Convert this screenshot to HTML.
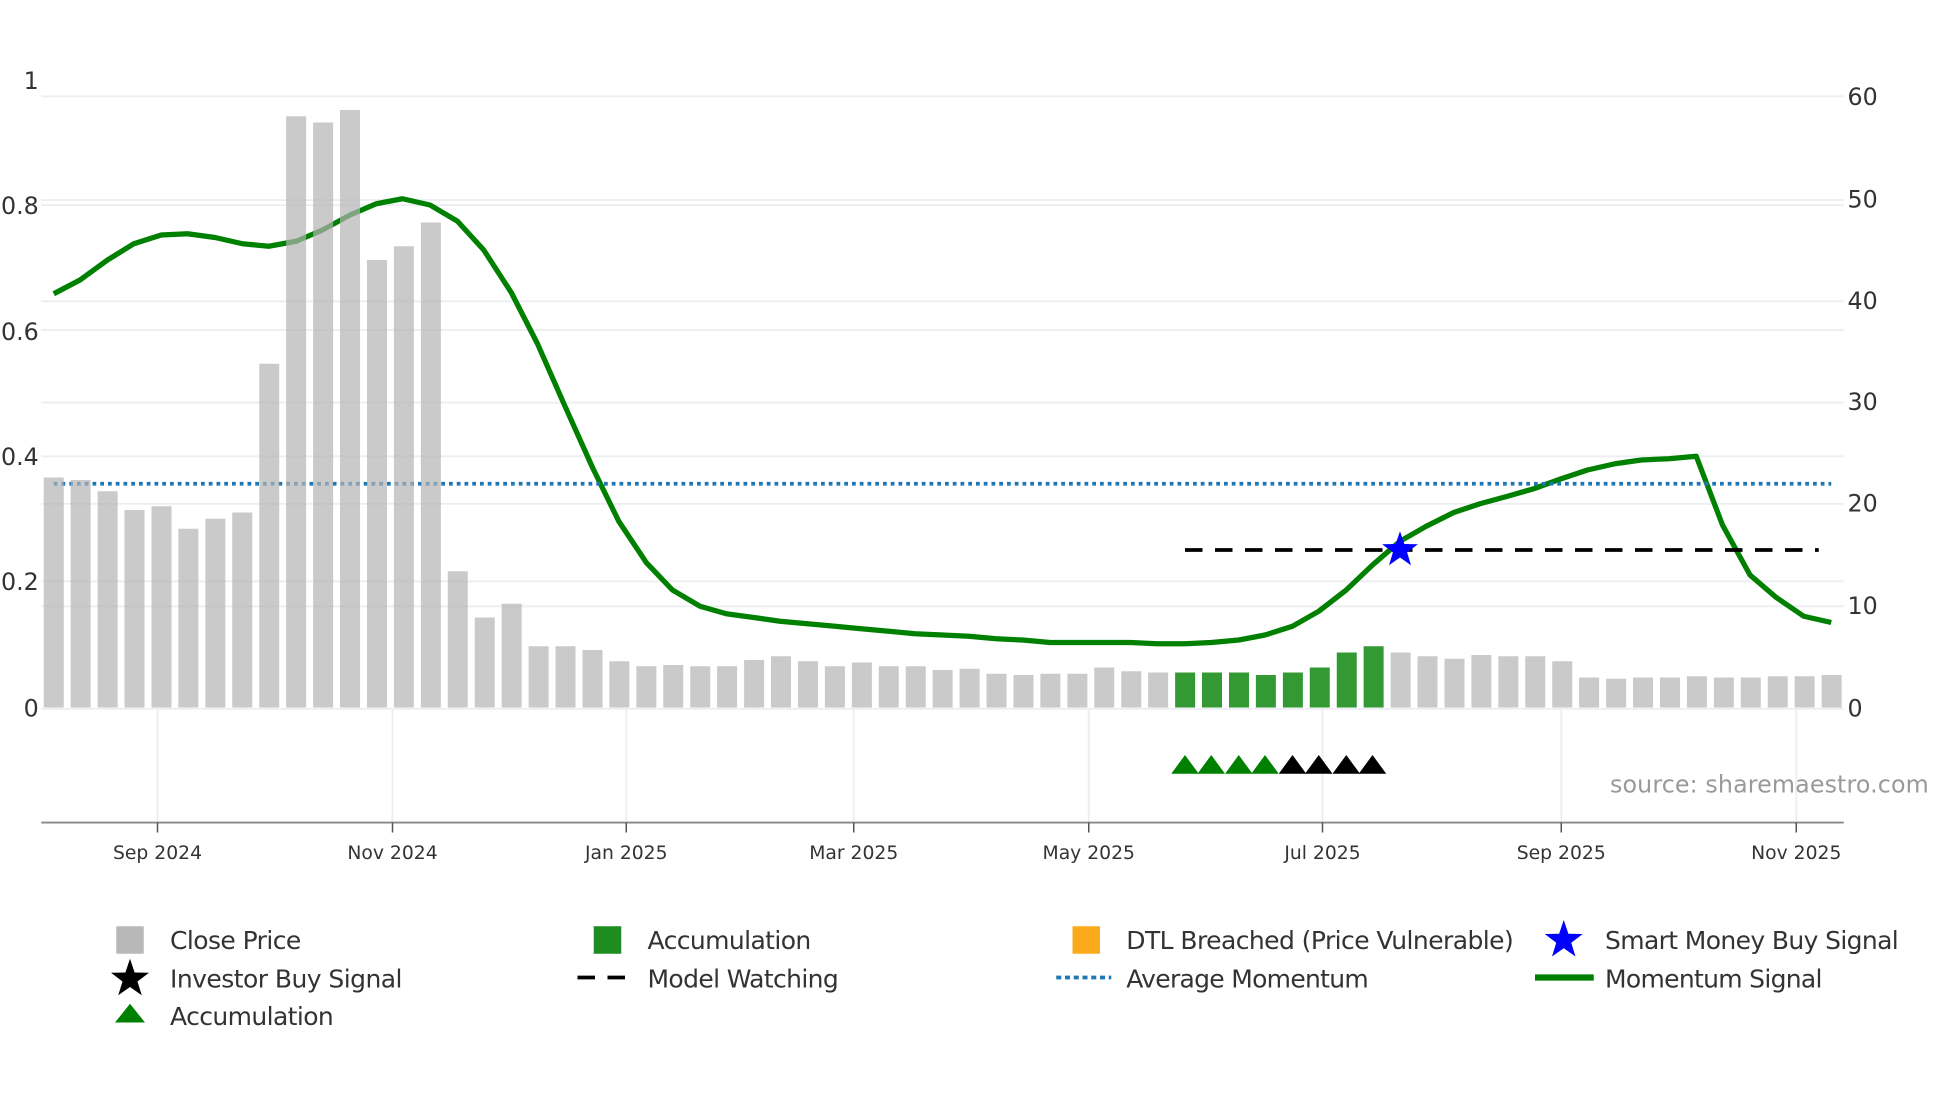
<!DOCTYPE html>
<html><head><meta charset="utf-8"><style>
html,body{margin:0;padding:0;background:#fff;}
svg{display:block;}
text{font-family:"DejaVu Sans","Liberation Sans",sans-serif;fill:#333;}
</style></head><body>
<svg width="1960" height="1102" viewBox="0 0 1568 881.6" xmlns="http://www.w3.org/2000/svg">
<g stroke="#eceef2" stroke-width="1.5">
<line x1="33" y1="77" x2="1475" y2="77"/><line x1="33" y1="160" x2="1475" y2="160"/><line x1="33" y1="241" x2="1475" y2="241"/><line x1="33" y1="322" x2="1475" y2="322"/><line x1="33" y1="403" x2="1475" y2="403"/><line x1="33" y1="485" x2="1475" y2="485"/>
<line x1="33" y1="164" x2="1475" y2="164"/><line x1="33" y1="264" x2="1475" y2="264"/><line x1="33" y1="365" x2="1475" y2="365"/><line x1="33" y1="465" x2="1475" y2="465"/><line x1="33" y1="567" x2="1475" y2="567"/>
<line x1="126" y1="568" x2="126" y2="658"/><line x1="314" y1="568" x2="314" y2="658"/><line x1="501" y1="568" x2="501" y2="658"/><line x1="683" y1="568" x2="683" y2="658"/><line x1="871" y1="568" x2="871" y2="658"/><line x1="1058" y1="568" x2="1058" y2="658"/><line x1="1249" y1="568" x2="1249" y2="658"/><line x1="1437" y1="568" x2="1437" y2="658"/>
</g>
<polyline fill="none" stroke="#008000" stroke-width="4.2" stroke-linejoin="round" points="43,235 64,224 86,208 107,195 129,188 150,187 172,190 194,195 215,197 237,193 258,184 280,172 301,163 322,159 344,164 366,177 387,200 409,234 430,275 452,325 474,374 495,417 517,450 538,472 560,485 581,491 603,494 624,497 646,499 668,501 689,503 711,505 732,507 754,508 775,509 797,511 818,512 840,514 861,514 883,514 904,514 926,515 948,515 969,514 991,512 1012,508 1034,501 1055,489 1077,472 1098,452 1120,433 1141,421 1163,410 1184,403 1206,397 1227,391 1249,383 1270,376 1292,371 1313,368 1335,367 1357,365 1378,420 1400,460 1421,478 1443,493 1465,498"/>
<line x1="43" y1="387" x2="1465" y2="387" stroke="#1f77b4" stroke-width="3" stroke-dasharray="3,3.2"/>
<g fill="#b3b3b3" fill-opacity="0.7">
<rect x="35" y="382" width="16" height="184"/><rect x="56.5" y="384" width="16" height="182"/><rect x="78.1" y="393" width="16" height="173"/><rect x="99.6" y="408" width="16" height="158"/><rect x="121.2" y="405" width="16" height="161"/><rect x="142.7" y="423" width="16" height="143"/><rect x="164.3" y="415" width="16" height="151"/><rect x="185.8" y="410" width="16" height="156"/><rect x="207.4" y="291" width="16" height="275"/><rect x="228.9" y="93" width="16" height="473"/><rect x="250.5" y="98" width="16" height="468"/><rect x="272" y="88" width="16" height="478"/><rect x="293.6" y="208" width="16" height="358"/><rect x="315.1" y="197" width="16" height="369"/><rect x="336.7" y="178" width="16" height="388"/><rect x="358.2" y="457" width="16" height="109"/><rect x="379.8" y="494" width="16" height="72"/><rect x="401.3" y="483" width="16" height="83"/><rect x="422.9" y="517" width="16" height="49"/><rect x="444.4" y="517" width="16" height="49"/><rect x="466" y="520" width="16" height="46"/><rect x="487.5" y="529" width="16" height="37"/><rect x="509.1" y="533" width="16" height="33"/><rect x="530.6" y="532" width="16" height="34"/><rect x="552.2" y="533" width="16" height="33"/><rect x="573.7" y="533" width="16" height="33"/><rect x="595.3" y="528" width="16" height="38"/><rect x="616.8" y="525" width="16" height="41"/><rect x="638.4" y="529" width="16" height="37"/><rect x="659.9" y="533" width="16" height="33"/><rect x="681.5" y="530" width="16" height="36"/><rect x="703" y="533" width="16" height="33"/><rect x="724.6" y="533" width="16" height="33"/><rect x="746.1" y="536" width="16" height="30"/><rect x="767.7" y="535" width="16" height="31"/><rect x="789.2" y="539" width="16" height="27"/><rect x="810.8" y="540" width="16" height="26"/><rect x="832.3" y="539" width="16" height="27"/><rect x="853.9" y="539" width="16" height="27"/><rect x="875.4" y="534" width="16" height="32"/><rect x="897" y="537" width="16" height="29"/><rect x="918.5" y="538" width="16" height="28"/>
<rect x="1112.5" y="522" width="16" height="44"/><rect x="1134" y="525" width="16" height="41"/><rect x="1155.6" y="527" width="16" height="39"/><rect x="1177.1" y="524" width="16" height="42"/><rect x="1198.7" y="525" width="16" height="41"/><rect x="1220.2" y="525" width="16" height="41"/><rect x="1241.8" y="529" width="16" height="37"/><rect x="1263.3" y="542" width="16" height="24"/><rect x="1284.9" y="543" width="16" height="23"/><rect x="1306.4" y="542" width="16" height="24"/><rect x="1328" y="542" width="16" height="24"/><rect x="1349.5" y="541" width="16" height="25"/><rect x="1371.1" y="542" width="16" height="24"/><rect x="1392.6" y="542" width="16" height="24"/><rect x="1414.2" y="541" width="16" height="25"/><rect x="1435.7" y="541" width="16" height="25"/><rect x="1457.3" y="540" width="16" height="26"/>
</g>
<g fill="#008000" fill-opacity="0.8">
<rect x="940.1" y="538" width="16" height="28"/><rect x="961.6" y="538" width="16" height="28"/><rect x="983.2" y="538" width="16" height="28"/><rect x="1004.7" y="540" width="16" height="26"/><rect x="1026.3" y="538" width="16" height="28"/><rect x="1047.8" y="534" width="16" height="32"/><rect x="1069.4" y="522" width="16" height="44"/><rect x="1090.9" y="517" width="16" height="49"/>
</g>
<line x1="948" y1="440" x2="1455" y2="440" stroke="#000" stroke-width="3" stroke-dasharray="14,10"/>
<polygon fill="#0000ff" points="1120,425 1123.5,435.2 1134.3,435.4 1125.7,441.9 1128.8,452.2 1120,446 1111.2,452.2 1114.3,441.9 1105.7,435.4 1116.5,435.2"/>
<g fill="#008000"><polygon points="937,619 948,604 959,619"/><polygon points="958,619 969,604 980,619"/><polygon points="980,619 991,604 1002,619"/><polygon points="1001,619 1012,604 1023,619"/></g>
<g fill="#000"><polygon points="1023,619 1034,604 1045,619"/><polygon points="1044,619 1055,604 1066,619"/><polygon points="1066,619 1077,604 1088,619"/><polygon points="1087,619 1098,604 1109,619"/></g>
<line x1="33" y1="658" x2="1475" y2="658" stroke="#888" stroke-width="1.5"/>
<g stroke="#555" stroke-width="1.2"><line x1="126" y1="658" x2="126" y2="666"/><line x1="314" y1="658" x2="314" y2="666"/><line x1="501" y1="658" x2="501" y2="666"/><line x1="683" y1="658" x2="683" y2="666"/><line x1="871" y1="658" x2="871" y2="666"/><line x1="1058" y1="658" x2="1058" y2="666"/><line x1="1249" y1="658" x2="1249" y2="666"/><line x1="1437" y1="658" x2="1437" y2="666"/></g>
<g font-size="15" text-anchor="middle">
<text x="126" y="687">Sep 2024</text><text x="314" y="687">Nov 2024</text><text x="501" y="687">Jan 2025</text><text x="683" y="687">Mar 2025</text><text x="871" y="687">May 2025</text><text x="1058" y="687">Jul 2025</text><text x="1249" y="687">Sep 2025</text><text x="1437" y="687">Nov 2025</text>
</g>
<g font-size="19" text-anchor="end">
<text x="31" y="71">1</text><text x="31" y="171">0.8</text><text x="31" y="272">0.6</text><text x="31" y="372">0.4</text><text x="31" y="472">0.2</text><text x="31" y="573">0</text>
</g>
<g font-size="19">
<text x="1478" y="84">60</text><text x="1478" y="166">50</text><text x="1478" y="247">40</text><text x="1478" y="328">30</text><text x="1478" y="409">20</text><text x="1478" y="491">10</text><text x="1478" y="573">0</text>
</g>
<text x="1288" y="634" font-size="19" style="fill:#999" textLength="255">source: sharemaestro.com</text>
<g font-size="20">
<rect x="93" y="741" width="22" height="22" fill="#b8b8b8"/><text x="136" y="759" textLength="105">Close Price</text>
<rect x="475" y="741" width="22" height="22" fill="#1e8c1e"/><text x="518" y="759" textLength="131">Accumulation</text>
<rect x="858" y="741" width="22" height="22" fill="#fbaa1b"/><text x="901" y="759" textLength="310">DTL Breached (Price Vulnerable)</text>
<polygon fill="#0000ff" points="1251,736 1254.7,747 1266.2,747.2 1257,754.2 1260.4,765.2 1251,758.6 1241.6,765.2 1245,754.2 1235.8,747.2 1247.3,747"/><text x="1284" y="759" textLength="235">Smart Money Buy Signal</text>
<polygon fill="#000" points="104,767 107.7,778 119.2,778.2 110,785.2 113.4,796.2 104,789.6 94.6,796.2 98,785.2 88.8,778.2 100.3,778"/><text x="136" y="790" textLength="186">Investor Buy Signal</text>
<line x1="462" y1="782" x2="506" y2="782" stroke="#000" stroke-width="3" stroke-dasharray="14,10"/><text x="518" y="790" textLength="153">Model Watching</text>
<line x1="845" y1="782" x2="889" y2="782" stroke="#1f77b4" stroke-width="3" stroke-dasharray="4,3"/><text x="901" y="790" textLength="194">Average Momentum</text>
<line x1="1228" y1="782" x2="1275" y2="782" stroke="#008000" stroke-width="5"/><text x="1284" y="790" textLength="174">Momentum Signal</text>
<polygon fill="#008000" points="92,818 104,803 116,818"/><text x="136" y="820" textLength="131">Accumulation</text>
</g>
</svg>
</body></html>
